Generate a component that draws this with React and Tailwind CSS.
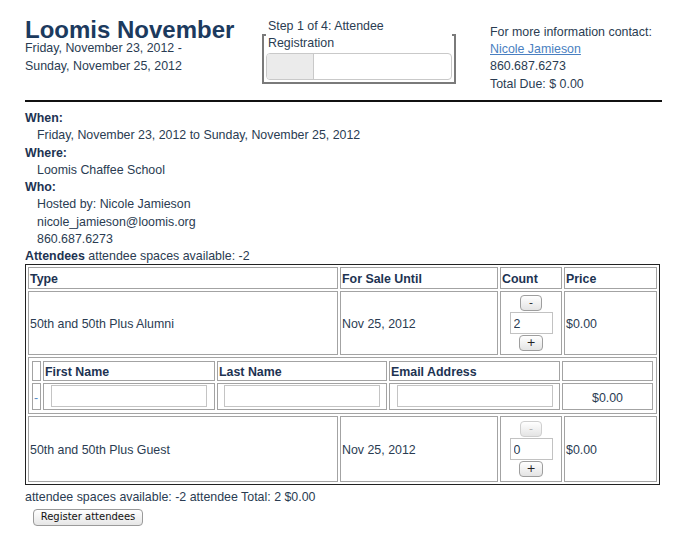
import React from "react";

function MiniBtn({ children, w, disabled }) {
  return (
    <button
      type="button"
      className={
        "flex items-center justify-center h-[16px] rounded-[4px] border bg-linear-to-b from-white to-[#e4e4e4] text-[11px] leading-none font-['DejaVu_Sans',sans-serif] " +
        (w === 24 ? "w-[24px] " : "w-[22px] ") +
        (disabled ? "border-[#cfcfcf] text-[#b0b0b0]" : "border-[#9e9e9e] text-[#222]")
      }
    >
      {children}
    </button>
  );
}

function CountCell({ value, minusDisabled }) {
  return (
    <td className="border border-[#a3a3a3] p-[1px] align-middle">
      <div className="flex flex-col items-center gap-[1px]">
        <MiniBtn w={22} disabled={minusDisabled}>-</MiniBtn>
        <input
          readOnly
          value={value}
          className="w-[43px] h-[22px] border border-[#c2c2c2] px-[3px] pt-[2px] text-[12.4px] text-[#2a3c52] bg-white outline-none"
        />
        <MiniBtn w={24}>+</MiniBtn>
      </div>
    </td>
  );
}

export default function App() {
  const th = "border border-[#a3a3a3] px-[1px] pt-[3px] pb-0 leading-[14px] text-left font-bold text-[#1d3352] align-middle";
  const td = "border border-[#a3a3a3] px-[1px] pt-[3px] pb-0 leading-[14px] text-left align-middle font-normal";
  const inp = "w-[156px] h-[22px] border border-[#c4c4c4] bg-white align-middle outline-none";
  return (
    <div className="w-[685px] h-[543px] bg-white font-['Liberation_Sans',Arial,sans-serif] text-[12.4px] text-[#2a3c52] overflow-hidden">
      <div className="pl-[25px]">
        <div className="flex h-[100px] items-start">
          <div className="w-[237px] pt-[21px]">
            <h1 className="text-[24px] leading-[18px] font-bold text-[#1c3a5e]">Loomis November</h1>
            <div className="leading-[17.5px] pt-[1px]">
              Friday, November 23, 2012 -<br />
              Sunday, November 25, 2012
            </div>
          </div>
          <fieldset className="w-[194px] mt-[17px] border-2 border-[#7a7a7a] px-[2px] pb-[2px]">
            <legend className="w-full px-[2px] pt-[1px] leading-[17px]">Step 1 of 4: Attendee Registration</legend>
            <div className="mt-[1px] h-[27px] rounded-[4px] border border-[#c9c9c9] flex overflow-hidden bg-white">
              <div className="w-[47px] bg-[#ebebeb] border-r border-[#c9c9c9]"></div>
            </div>
          </fieldset>
          <div className="ml-[34px] pt-[24px] leading-[17.2px]">
            <div>For more information contact:</div>
            <div>
              <a href="#" className="text-[#4a7fc1] underline">Nicole Jamieson</a>
            </div>
            <div>860.687.6273</div>
            <div>Total Due: $ 0.00</div>
          </div>
        </div>
        <div className="w-[637px] h-[2px] bg-[#111]"></div>

        <div className="mt-[8px] leading-[17.3px]">
          <div className="font-bold text-[#1d3352]">When:</div>
          <div className="pl-[12px]">Friday, November 23, 2012 to Sunday, November 25, 2012</div>
          <div className="font-bold text-[#1d3352]">Where:</div>
          <div className="pl-[12px]">Loomis Chaffee School</div>
          <div className="font-bold text-[#1d3352]">Who:</div>
          <div className="pl-[12px]">Hosted by: Nicole Jamieson</div>
          <div className="pl-[12px]">nicole_jamieson@loomis.org</div>
          <div className="pl-[12px]">860.687.6273</div>
          <div>
            <span className="font-bold text-[#1d3352]">Attendees</span> attendee spaces available: -2
          </div>
        </div>

        <table className="-mt-[2px] w-[635px] table-fixed border-separate border-spacing-[2px] border border-[#222]">
          <tbody>
            <tr className="h-[22px]">
              <th className={th + " w-[310px]"}>Type</th>
              <th className={th + " w-[158px]"}>For Sale Until</th>
              <th className={th + " w-[62px]"}>Count</th>
              <th className={th + " w-[93px]"}>Price</th>
            </tr>
            <tr className="h-[64px]">
              <td className={td}>50th and 50th Plus Alumni</td>
              <td className={td}>Nov 25, 2012</td>
              <CountCell value="2" />
              <td className={td}>$0.00</td>
            </tr>
            <tr>
              <td colSpan={4} className="border border-[#a3a3a3] p-[1px]">
                <table className="w-full table-fixed border-separate border-spacing-[2px]">
                  <tbody>
                    <tr className="h-[20px]">
                      <th className={th + " w-[9px]"}></th>
                      <th className={th + " w-[172px]"}>First Name</th>
                      <th className={th + " w-[170px]"}>Last Name</th>
                      <th className={th + " w-[171px]"}>Email Address</th>
                      <th className={th}></th>
                    </tr>
                    <tr className="h-[27px]">
                      <td className={td + " text-[#5a8cc4]"}>-</td>
                      <td className="border border-[#a3a3a3] p-[1px] text-center align-middle">
                        <input readOnly className={inp} />
                      </td>
                      <td className="border border-[#a3a3a3] p-[1px] text-center align-middle">
                        <input readOnly className={inp} />
                      </td>
                      <td className="border border-[#a3a3a3] p-[1px] text-center align-middle">
                        <input readOnly className={inp} />
                      </td>
                      <td className={td + " !text-center"}>$0.00</td>
                    </tr>
                  </tbody>
                </table>
              </td>
            </tr>
            <tr className="h-[66px]">
              <td className={td}>50th and 50th Plus Guest</td>
              <td className={td}>Nov 25, 2012</td>
              <CountCell value="0" minusDisabled />
              <td className={td}>$0.00</td>
            </tr>
          </tbody>
        </table>

        <div className="mt-[4px] leading-[17.3px]">attendee spaces available: -2 attendee Total: 2 $0.00</div>
        <button
          type="button"
          className="mt-[3px] ml-[8px] w-[110px] h-[17px] rounded-[4px] border border-[#9a9a9a] bg-linear-to-b from-white to-[#e6e6e6] font-['DejaVu_Sans',sans-serif] text-[10px] leading-none text-[#111]"
        >
          Register attendees
        </button>
      </div>
    </div>
  );
}
